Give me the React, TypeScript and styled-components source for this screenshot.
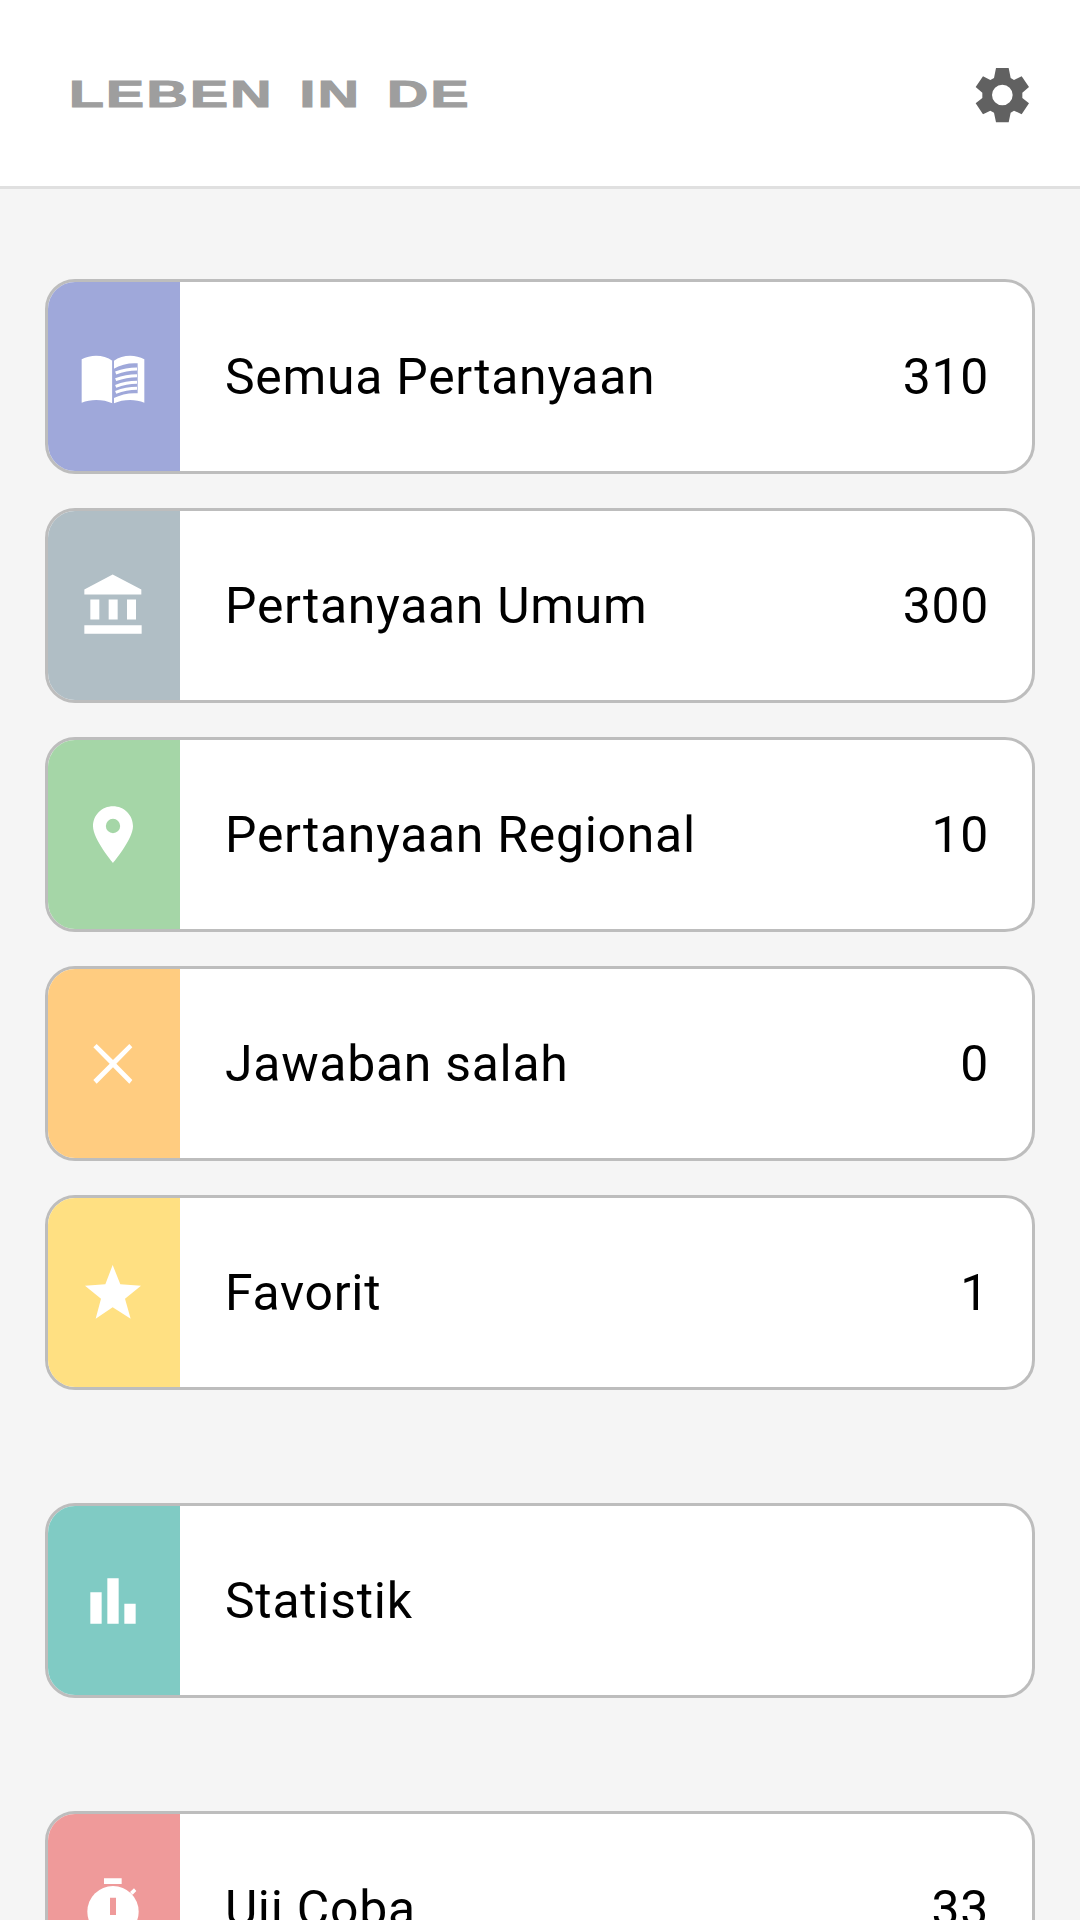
import React from "react";
import styled, { createGlobalStyle } from "styled-components";

const Global = createGlobalStyle`
  html, body { margin: 0; padding: 0; height: 1920px; overflow: hidden; background: #f5f5f5; }
  #root { height: 1920px; overflow: hidden; }
`;

const Page = styled.div`
  width: 1080px;
  height: 1920px;
  overflow: hidden;
  background: #f5f5f5;
  font-family: Roboto, "Liberation Sans", sans-serif;
`;

const Header = styled.header`
  box-sizing: border-box;
  height: 189px;
  background: #fff;
  border-bottom: 3px solid #e0e0e0;
  display: flex;
  align-items: center;
  justify-content: space-between;
  padding: 4px 48px 0 69px;
`;

const Logo = styled.div`
  font-family: "Liberation Sans", Arial, sans-serif;
  font-weight: 700;
  font-size: 37px;
  line-height: 38px;
  color: #9e9e9e;
  white-space: pre;
  word-spacing: 5px;
  letter-spacing: 1.5px;
  -webkit-text-stroke: 1.1px #9e9e9e;
  transform: scaleX(1.54);
  transform-origin: left center;
`;

const List = styled.main`
  display: flex;
  flex-direction: column;
  gap: 113.5px;
  padding: 90px 45px 0;
`;

const Group = styled.section`
  display: flex;
  flex-direction: column;
  gap: 34.5px;
`;

const Card = styled.div`
  box-sizing: border-box;
  height: 194.5px;
  flex: none;
  display: flex;
  align-items: stretch;
  background: #fff;
  border: 3px solid #bdbdbd;
  border-radius: 30px;
  overflow: hidden;
`;

const IconPanel = styled.div<{ $color: string }>`
  width: 132px;
  flex: none;
  display: flex;
  align-items: center;
  justify-content: center;
  background: ${(p) => p.$color};
`;

const Body = styled.div`
  flex: 1;
  display: flex;
  align-items: center;
  justify-content: space-between;
  padding: 1px 43px 0 45px;
`;

const Label = styled.span`
  font-size: 49.875px;
  letter-spacing: 0.75px;
  color: #000;
`;

const Count = styled.span`
  font-size: 49.875px;
  letter-spacing: 0.75px;
  color: #000;
`;

const Glyph = styled.svg`
  width: 72px;
  height: 72px;
  display: block;
  fill: #fff;
`;

const GearGlyph = styled.svg`
  width: 60px;
  height: 60px;
  display: block;
  fill: #616161;
`;

const Gear = () => (
  <GearGlyph viewBox="215 77 180 180">
    <path
      fillRule="evenodd"
      d="M287 86H325L331 116L341 122L364 111L386 143L366 160V176L386 192L364 225L341 214L331 220L325 249H287L281 220L270 214L248 225L226 192L246 176V160L226 143L248 111L270 122L281 116ZM306 136A31 31 0 1 0 306 198A31 31 0 1 0 306 136Z"
    />
  </GearGlyph>
);

const Book = ({ color }: { color: string }) => (
  <Glyph viewBox="144 210 216 216">
    <path d="M155 268C184 252 222 254 247 272V400C222 388 184 386 155 398Z" />
    <path
      fillRule="evenodd"
      d="M252 272C277 254 315 252 343 268V398C315 386 277 388 252 400ZM250 297C272 283 300 278 323 280V370C300 368 272 373 250 385Z"
    />
    <path
      fill="none"
      stroke="#fff"
      strokeWidth="9"
      d="M257 309C278 301 300 297 321 297M257 329C278 321 300 317 321 317M257 349C278 341 300 337 321 337M257 367C278 359 300 355 321 355"
    />
    <path fill={color} d="M247 272H252V400H247Z" />
  </Glyph>
);

const Bank = () => (
  <Glyph viewBox="144 208.5 216 216">
    <path d="M248 225L334 270V285H163V270ZM181 300H208V360H181ZM236 300H263V360H236ZM291 300H318V360H291ZM163 377H335V403H163Z" />
  </Glyph>
);

const Pin = () => (
  <Glyph viewBox="144 205.5 216 216">
    <path
      fillRule="evenodd"
      d="M249 230C216 230 189 256 189 290C189 329 249 400 249 400C249 400 309 329 309 290C309 256 282 230 249 230ZM249 268A21 21 0 1 1 249 311A21 21 0 1 1 249 268Z"
    />
  </Glyph>
);

const Cross = () => (
  <Glyph viewBox="144 201 216 216">
    <path d="M200 252L249 300L298 252L307 262L259 311L307 360L298 371L249 322L200 371L190 360L239 311L190 262Z" />
  </Glyph>
);

const Star = () => (
  <Glyph viewBox="144 198 216 216">
    <path d="M248 225L271 283L333 287L285 326L302 386L248 352L197 386L213 326L165 287L226 283Z" />
  </Glyph>
);

const Bars = () => (
  <Glyph viewBox="144 192 216 216">
    <path d="M181 277H215V371H181ZM232 235H266V371H232ZM283 311H317V371H283Z" />
  </Glyph>
);

const Watch = ({ color }: { color: string }) => (
  <Glyph viewBox="144 246 216 216">
    <path d="M222 265H275V282H222ZM300 306L312 295L319 303L308 314Z" />
    <circle cx="249" cy="365" r="77" />
    <path fill={color} d="M240 323H258V375H240Z" />
  </Glyph>
);

type Row = { color: string; icon: React.ReactNode; label: string; count?: string };

const groups: Row[][] = [
  [
    { color: "#9fa8da", icon: <Book color="#9fa8da" />, label: "Semua Pertanyaan", count: "310" },
    { color: "#b0bec5", icon: <Bank />, label: "Pertanyaan Umum", count: "300" },
    { color: "#a5d6a7", icon: <Pin />, label: "Pertanyaan Regional", count: "10" },
    { color: "#ffcc80", icon: <Cross />, label: "Jawaban salah", count: "0" },
    { color: "#ffe082", icon: <Star />, label: "Favorit", count: "1" },
  ],
  [{ color: "#80cbc4", icon: <Bars />, label: "Statistik" }],
  [{ color: "#ef9a9a", icon: <Watch color="#ef9a9a" />, label: "Uji Coba", count: "33" }],
];

export default function App() {
  return (
    <Page>
      <Global />
      <Header>
        <Logo>LEBEN IN DE</Logo>
        <Gear />
      </Header>
      <List>
        {groups.map((rows, i) => (
          <Group key={i}>
            {rows.map((r) => (
              <Card key={r.label}>
                <IconPanel $color={r.color}>{r.icon}</IconPanel>
                <Body>
                  <Label>{r.label}</Label>
                  {r.count && <Count>{r.count}</Count>}
                </Body>
              </Card>
            ))}
          </Group>
        ))}
      </List>
    </Page>
  );
}
